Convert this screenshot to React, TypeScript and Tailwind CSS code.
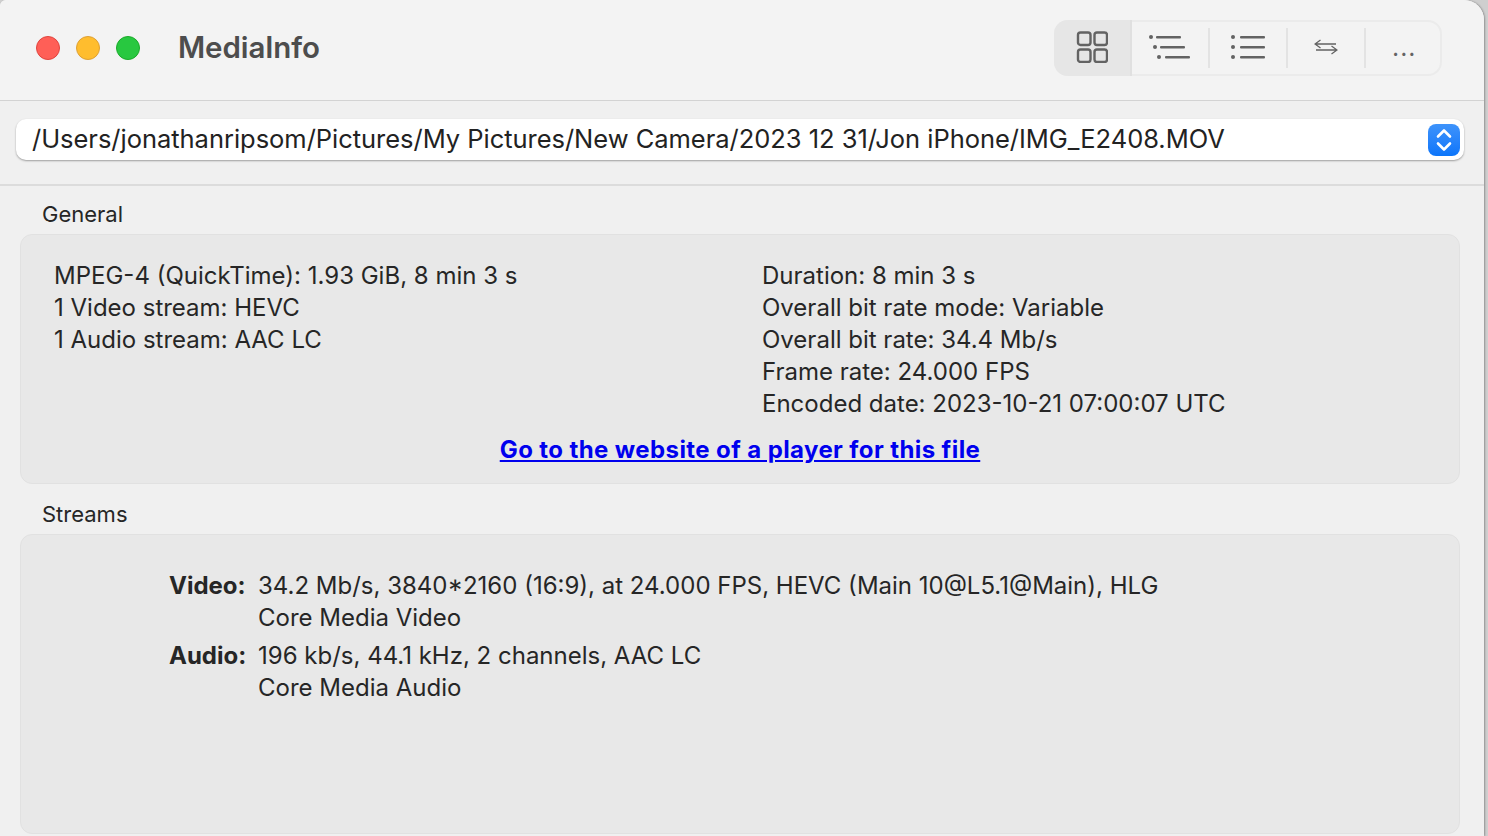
const font = { fontFamily: "Inter, 'Noto Sans', sans-serif" };

function GridIcon() {
  return (
    <svg width="32" height="32" viewBox="0 0 32 32" fill="none" stroke="#636363" strokeWidth="2.4">
      <rect x="2" y="1.5" width="12.5" height="12.5" rx="2.5" />
      <rect x="18.5" y="1.5" width="12.5" height="12.5" rx="2.5" />
      <rect x="2" y="18.5" width="12.5" height="12.5" rx="2.5" />
      <rect x="18.5" y="18.5" width="12.5" height="12.5" rx="2.5" />
    </svg>
  );
}

function TreeIcon() {
  return (
    <svg width="44" height="28" viewBox="0 0 44 28" fill="#636363">
      <circle cx="3" cy="4" r="2" />
      <circle cx="7" cy="14" r="2" />
      <circle cx="11" cy="24" r="2" />
      <rect x="8" y="3" width="25" height="2.4" rx="1" />
      <rect x="12" y="13" width="25" height="2.4" rx="1" />
      <rect x="17" y="23" width="25" height="2.4" rx="1" />
    </svg>
  );
}

function ListIcon() {
  return (
    <svg width="36" height="28" viewBox="0 0 36 28" fill="#636363">
      <circle cx="3" cy="4" r="2" />
      <circle cx="3" cy="14" r="2" />
      <circle cx="3" cy="24" r="2" />
      <rect x="10" y="3" width="25" height="2.4" rx="1" />
      <rect x="10" y="13" width="25" height="2.4" rx="1" />
      <rect x="10" y="23" width="25" height="2.4" rx="1" />
    </svg>
  );
}

function SwapIcon() {
  return (
    <svg width="24" height="16" viewBox="0 0 24 16" fill="none" stroke="#636363" strokeWidth="1.3">
      <path d="M6.5 1 1 5l5.5 4M1 5h21" />
      <path d="M17.5 7 23 11l-5.5 4M23 11H2" />
    </svg>
  );
}

function Stepper() {
  return (
    <div className="flex h-[32px] w-[32px] items-center justify-center rounded-[8px] bg-gradient-to-b from-[#3d93fb] to-[#0a75fa]">
      <svg width="18" height="26" viewBox="0 0 18 26" fill="none" stroke="#fff" strokeWidth="2.6" strokeLinecap="round" strokeLinejoin="round">
        <path d="M3 9.5 9 3.5l6 6" />
        <path d="M3 16.5l6 6 6-6" />
      </svg>
    </div>
  );
}

export default function App() {
  return (
    <div className="h-[836px] w-[1488px] overflow-hidden bg-[#cfcfcf] text-[#262626]" style={font}>
      <div className="h-[836px] w-[1484px] overflow-hidden rounded-tl-[6px] rounded-tr-[20px] bg-[#f0f0f0] shadow-[1px_0_2px_rgba(0,0,0,0.3)]">
        <header className="flex h-[101px] items-start border-b border-[#d3d3d3] bg-[#f3f3f3] pl-[36px] pr-[42px]">
          <div className="mt-[36px] flex gap-[16px]">
            <span className="h-[24px] w-[24px] rounded-full border border-[#e0443e] bg-[#ff5f57]" />
            <span className="h-[24px] w-[24px] rounded-full border border-[#dea034] bg-[#ffbd2e]" />
            <span className="h-[24px] w-[24px] rounded-full border border-[#1aab29] bg-[#28c840]" />
          </div>
          <h1 className="ml-[38px] mt-[29px] text-[29.5px] leading-[36px] font-semibold tracking-[-0.1px] text-[#4d4d4d]">MediaInfo</h1>
          <div className="ml-auto mt-[20px] flex h-[56px] w-[388px] rounded-[14px] border-2 border-[#ebebeb]">
            <div className="-my-[2px] -ml-[2px] flex w-[78px] items-center justify-center rounded-l-[14px] border-r-2 border-[#e0e0e0] bg-[#e6e6e6] pb-[2px]">
              <GridIcon />
            </div>
            <div className="flex w-[76px] items-center justify-center pb-[2px]">
              <TreeIcon />
            </div>
            <div className="my-[6px] w-[2px] bg-[#e3e3e3]" />
            <div className="flex w-[76px] items-center justify-center pb-[2px]">
              <ListIcon />
            </div>
            <div className="my-[6px] w-[2px] bg-[#e3e3e3]" />
            <div className="flex w-[76px] items-center justify-center pb-[2px]">
              <SwapIcon />
            </div>
            <div className="my-[6px] w-[2px] bg-[#e3e3e3]" />
            <div className="flex flex-1 items-center justify-center pb-[1px] pl-[3px] text-[22px] leading-none font-medium tracking-[1.5px] text-[#636363]">...</div>
          </div>
        </header>

        <div className="flex h-[85px] items-start border-b-2 border-[#dcdcdc] pl-[16px] pt-[18px]">
          <div className="flex h-[41px] w-[1448px] items-center justify-between rounded-[10px] bg-white pl-[16px] pr-[4px] shadow-[0_1px_2px_rgba(0,0,0,0.35)]">
            <span className="pb-[2px] text-[25.5px] leading-[32px] tracking-[-0.03px] text-[#222]">/Users/jonathanripsom/Pictures/My Pictures/New Camera/2023 12 31/Jon iPhone/IMG_E2408.MOV</span>
            <Stepper />
          </div>
        </div>

        <main className="px-[20px] pr-[24px] text-[24px] leading-[32px]">
          <h2 className="ml-[22px] mt-[12px] h-[36px] text-[22px] leading-[32px]">General</h2>
          <section className="h-[250px] rounded-[12px] border border-[#e1e1e1] bg-[#e8e8e8] pt-[25px]">
            <div className="grid grid-cols-[708px_1fr] pl-[33px]">
              <div>
                <p>MPEG-4 (QuickTime): 1.93 GiB, 8 min 3 s</p>
                <p>1 Video stream: HEVC</p>
                <p>1 Audio stream: AAC LC</p>
              </div>
              <div>
                <p>Duration: 8 min 3 s</p>
                <p>Overall bit rate mode: Variable</p>
                <p>Overall bit rate: 34.4 Mb/s</p>
                <p>Frame rate: 24.000 FPS</p>
                <p>Encoded date: 2023-10-21 07:00:07 UTC</p>
              </div>
            </div>
            <div className="mt-[14px] text-center">
              <a href="#" className="font-bold tracking-[0.4px] text-[#0000ee] underline">Go to the website of a player for this file</a>
            </div>
          </section>

          <h2 className="ml-[22px] mt-[14px] h-[36px] text-[22px] leading-[32px]">Streams</h2>
          <section className="h-[300px] rounded-[12px] border border-[#e1e1e1] bg-[#e8e8e8] pt-[35px]">
            <div className="grid grid-cols-[89px_1fr] gap-y-[6px] pl-[148px]">
              <span className="font-bold">Video:</span>
              <div>
                <p>34.2 Mb/s, 3840*2160 (16:9), at 24.000 FPS, HEVC (Main 10@L5.1@Main), HLG</p>
                <p>Core Media Video</p>
              </div>
              <span className="font-bold">Audio:</span>
              <div>
                <p>196 kb/s, 44.1 kHz, 2 channels, AAC LC</p>
                <p>Core Media Audio</p>
              </div>
            </div>
          </section>
        </main>
      </div>
    </div>
  );
}
